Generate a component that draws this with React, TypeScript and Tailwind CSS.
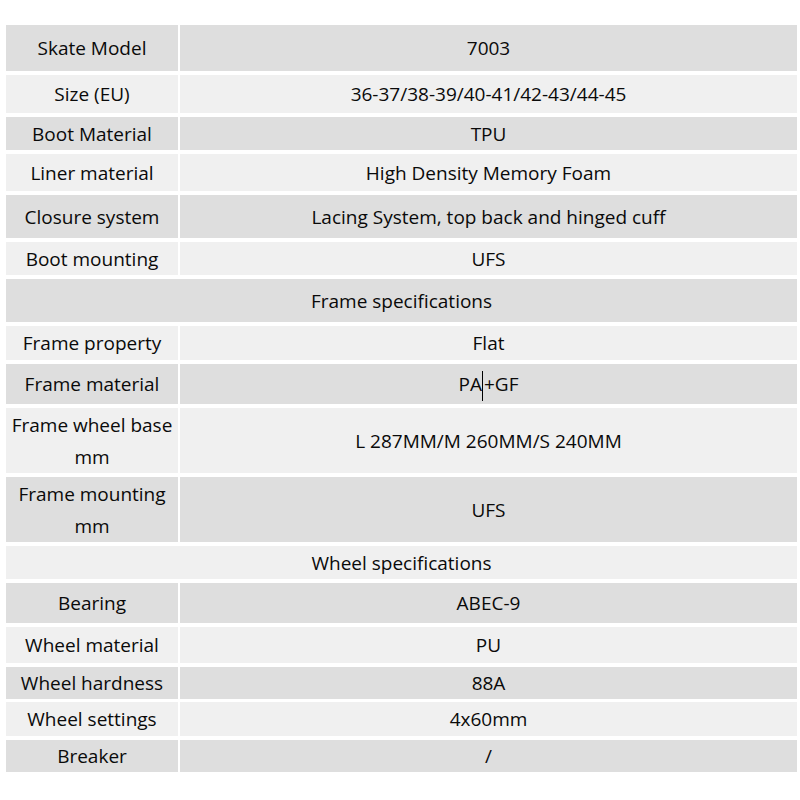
import React from "react";

type Row =
  | { kind: "pair"; label: React.ReactNode; value: React.ReactNode; h: string; tone: "d" | "l" }
  | { kind: "full"; label: string; h: string; tone: "d" | "l" };

const rows: Row[] = [
  { kind: "pair", label: "Skate Model", value: "7003", h: "h-[46px]", tone: "d" },
  { kind: "pair", label: "Size (EU)", value: "36-37/38-39/40-41/42-43/44-45", h: "h-[38px]", tone: "l" },
  { kind: "pair", label: "Boot Material", value: "TPU", h: "h-[33px]", tone: "d" },
  { kind: "pair", label: "Liner material", value: "High Density Memory Foam", h: "h-[37px]", tone: "l" },
  { kind: "pair", label: "Closure system", value: "Lacing System, top back and hinged cuff", h: "h-[43px]", tone: "d" },
  { kind: "pair", label: "Boot mounting", value: "UFS", h: "h-[33px]", tone: "l" },
  { kind: "full", label: "Frame specifications", h: "h-[43px]", tone: "d" },
  { kind: "pair", label: "Frame property", value: "Flat", h: "h-[34px]", tone: "l" },
  {
    kind: "pair",
    label: "Frame material",
    value: (
      <span>
        PA
        <span className="inline-block w-px h-[30px] bg-black align-middle -my-2 mx-[0.5px]" />
        +GF
      </span>
    ),
    h: "h-[40px]",
    tone: "d",
  },
  {
    kind: "pair",
    label: (
      <>
        Frame wheel base
        <br />
        mm
      </>
    ),
    value: "L 287MM/M 260MM/S 240MM",
    h: "h-[65px]",
    tone: "l",
  },
  {
    kind: "pair",
    label: (
      <>
        Frame mounting
        <br />
        mm
      </>
    ),
    value: "UFS",
    h: "h-[65px]",
    tone: "d",
  },
  { kind: "full", label: "Wheel specifications", h: "h-[33px]", tone: "l" },
  { kind: "pair", label: "Bearing", value: "ABEC-9", h: "h-[40px]", tone: "d" },
  { kind: "pair", label: "Wheel material", value: "PU", h: "h-[36px]", tone: "l" },
  { kind: "pair", label: "Wheel hardness", value: "88A", h: "h-[31px]", tone: "d" },
  { kind: "pair", label: "Wheel settings", value: "4x60mm", h: "h-[34px]", tone: "l" },
  { kind: "pair", label: "Breaker", value: "/", h: "h-[32px]", tone: "d" },
];

export default function App() {
  return (
    <div
      className="w-[800px] h-[800px] bg-white pt-[25px] pl-[6px] text-[#0a0a0a] text-[19px] leading-[32px]"
      style={{ fontFamily: '"Open Sans", "Noto Sans", sans-serif' }}
    >
      <div className="w-[791px] flex flex-col gap-[4px]">
        {rows.map((r, i) => {
          const bg = r.tone === "d" ? "bg-[#dedede]" : "bg-[#f0f0f0]";
          if (r.kind === "full") {
            return (
              <div key={i} className={`${r.h} ${bg} flex items-center justify-center`}>
                {r.label}
              </div>
            );
          }
          return (
            <div key={i} className={`${r.h} grid grid-cols-[172px_617px] gap-[2px]`}>
              <div className={`${bg} flex items-center justify-center text-center whitespace-nowrap`}>{r.label}</div>
              <div className={`${bg} flex items-center justify-center text-center`}>{r.value}</div>
            </div>
          );
        })}
      </div>
    </div>
  );
}
